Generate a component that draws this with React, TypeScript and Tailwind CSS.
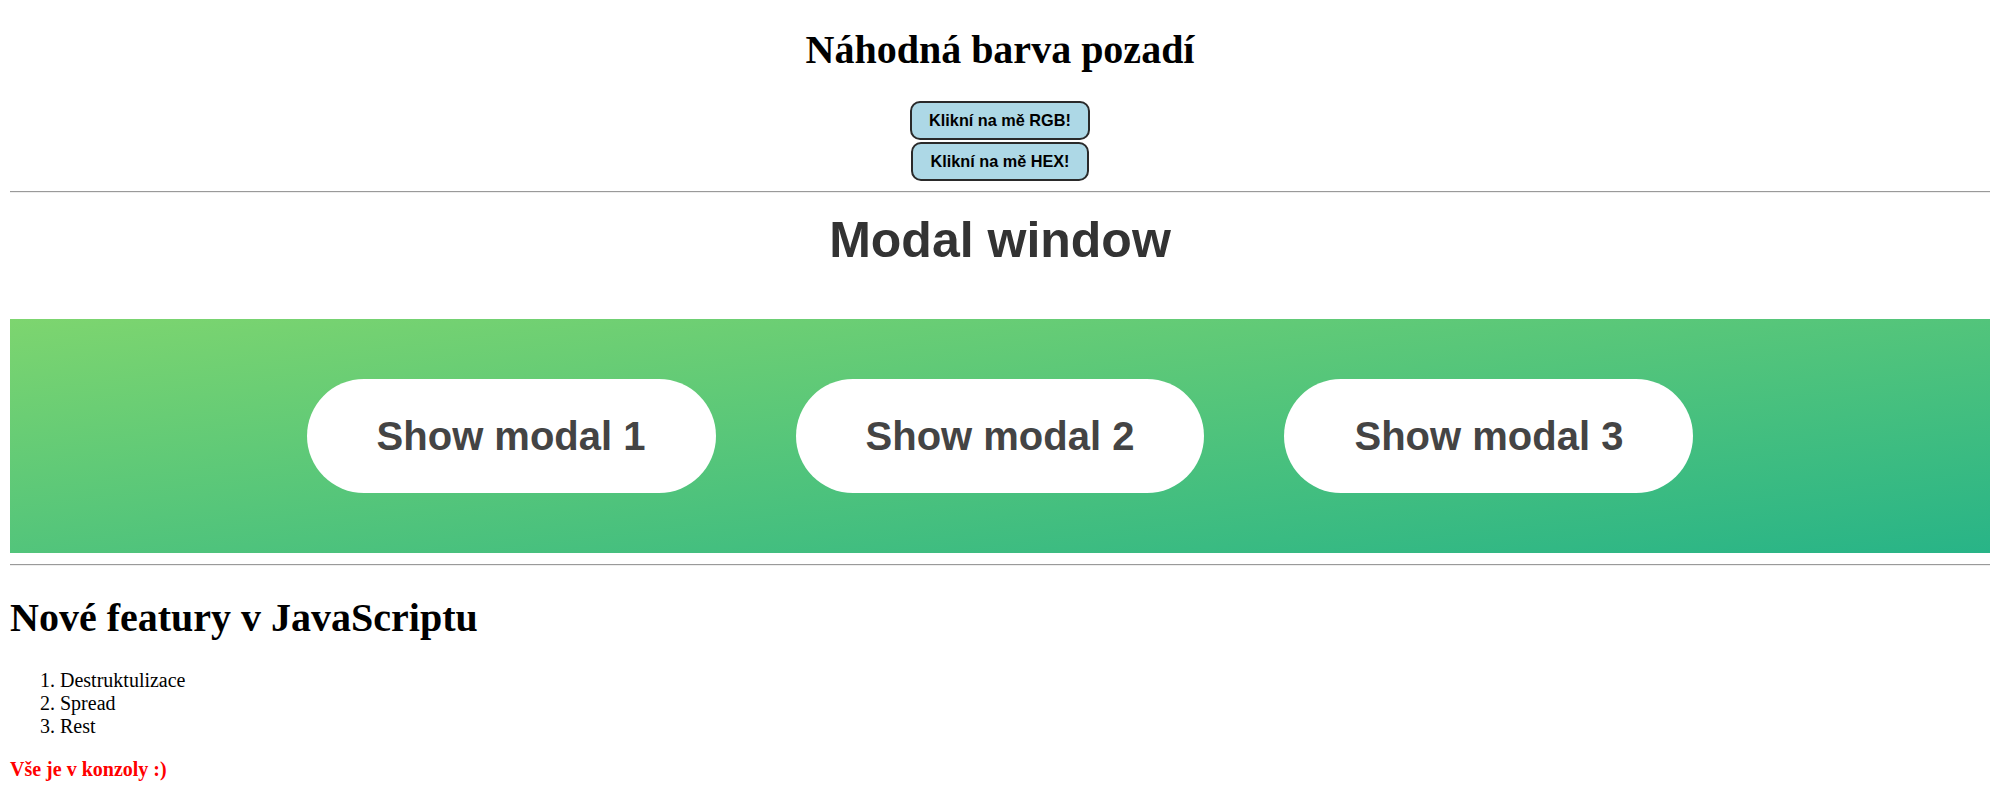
import { useState } from 'react'

const serif = "font-['Liberation_Serif','Times_New_Roman',serif]"
const sans = "font-['Liberation_Sans',Arial,sans-serif]"

const features = ['Destruktulizace', 'Spread', 'Rest']

function randomRgb() {
  const c = () => Math.floor(Math.random() * 256)
  return `rgb(${c()}, ${c()}, ${c()})`
}

function randomHex() {
  return '#' + Math.floor(Math.random() * 0xffffff).toString(16).padStart(6, '0')
}

export default function App() {
  const [bg, setBg] = useState<string | undefined>(undefined)
  const [openModal, setOpenModal] = useState<number | null>(null)

  return (
    <div className="min-h-screen bg-white px-[10px] pt-[27px] pb-[40px]" style={bg ? { backgroundColor: bg } : undefined}>
      {/* random background */}
      <h1 className={`${serif} text-center text-[40px] leading-[46px] font-bold text-black`}>
        Náhodná barva pozadí
      </h1>
      <div className="mt-[28px] flex flex-col items-center gap-[2px]">
        <button
          onClick={() => setBg(randomRgb())}
          className={`${sans} rounded-[10px] border-2 border-[#2a2a2a] bg-[#add8e6] px-[17.5px] py-[8px] text-[16.25px] leading-[19px] font-bold text-black`}
        >
          Klikní na mě RGB!
        </button>
        <button
          onClick={() => setBg(randomHex())}
          className={`${sans} rounded-[10px] border-2 border-[#2a2a2a] bg-[#add8e6] px-[17.5px] py-[8px] text-[16.25px] leading-[19px] font-bold text-black`}
        >
          Klikní na mě HEX!
        </button>
      </div>

      <hr className="mt-[10px] h-0 border-t border-b border-t-[#9a9a9a] border-b-[#eeeeee]" />

      {/* modal window */}
      <h2 className={`${sans} mt-[18px] text-center text-[50px] leading-[58px] font-bold text-[#333]`}>
        Modal window
      </h2>
      <div className="mt-[50px] flex justify-center gap-[80px] bg-[linear-gradient(to_top_left,#28b487,#7dd56f)] py-[60px]">
        {[1, 2, 3].map(n => (
          <button
            key={n}
            onClick={() => setOpenModal(n)}
            className={`${sans} rounded-full bg-white px-[70px] py-[34px] text-[40px] leading-[46px] font-bold text-[#444]`}
          >
            Show modal {n}
          </button>
        ))}
      </div>

      <hr className="mt-[11px] h-0 border-t border-b border-t-[#9a9a9a] border-b-[#eeeeee]" />

      {/* features */}
      <h2 className={`${serif} mt-[29px] text-[40px] leading-[46px] font-bold text-black`}>
        Nové featury v JavaScriptu
      </h2>
      <ol className={`${serif} mt-[28px] list-decimal pl-[50px] text-[20px] leading-[23px] text-black`}>
        {features.map(f => (
          <li key={f}>{f}</li>
        ))}
      </ol>
      <p className={`${serif} mt-[20px] text-[20px] leading-[23px] font-bold text-[#ff0000]`}>
        Vše je v konzoly :)
      </p>

      {openModal !== null && (
        <div className="fixed inset-0 flex items-center justify-center bg-black/60" onClick={() => setOpenModal(null)}>
          <div className={`${sans} rounded-[10px] bg-white p-[60px] text-[30px] text-[#333]`}>
            Modal {openModal}
          </div>
        </div>
      )}
    </div>
  )
}
